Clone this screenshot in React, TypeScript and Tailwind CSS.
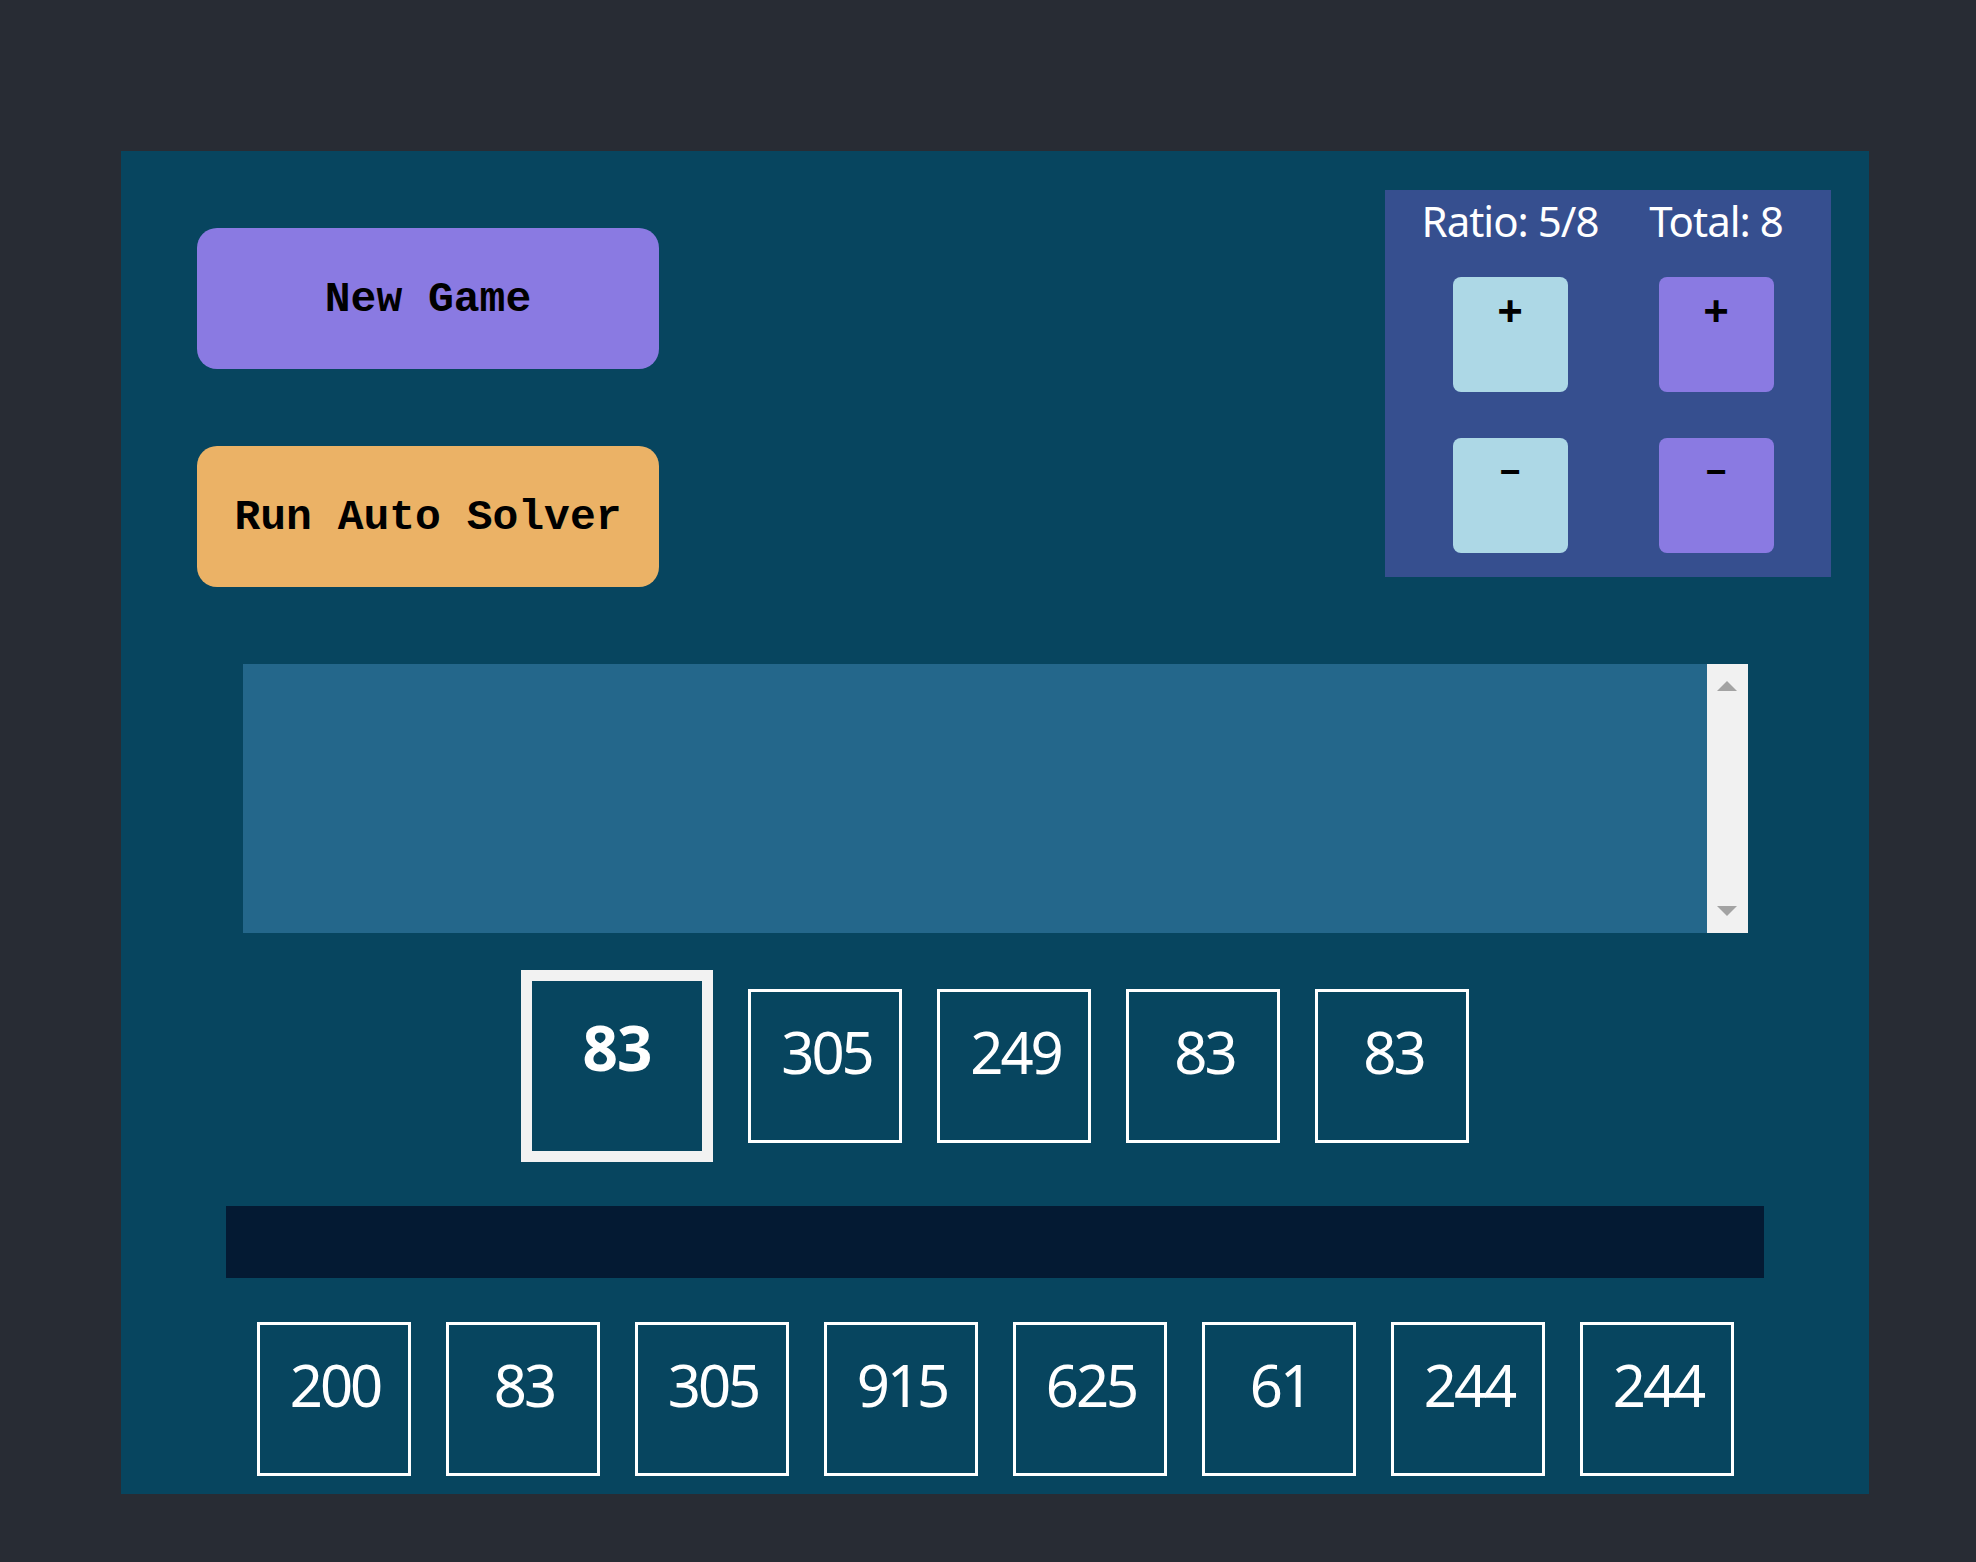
const topCards = [305, 249, 83, 83];
const bottomCards = [200, 83, 305, 915, 625, 61, 244, 244];

const numFont = { fontFamily: '"Noto Sans", "Open Sans", sans-serif' };

function NumberCard({ value }: { value: number }) {
  return (
    <div className="w-[154px] h-[154px] border-[3px] border-white text-white text-center pt-[20px] pl-[3px] text-[58px] leading-[79px] tracking-[-3px]">
      {value}
    </div>
  );
}

function StepButton({ label, tone }: { label: string; tone: "blue" | "purple" }) {
  const bg = tone === "blue" ? "bg-[#add8e6]" : "bg-[#8a7ae2]";
  return (
    <button type="button" className={`w-[115px] h-[115px] rounded-[8px] ${bg} flex justify-center items-start text-black font-bold`}>
      {label === "+" ? (
        <span className="pt-[10px] text-[45px] leading-[45px]">+</span>
      ) : (
        <span className="pt-[14px] text-[37px] leading-[37px]">−</span>
      )}
    </button>
  );
}

export default function App() {
  return (
    <div className="min-h-screen bg-[#282c34] pt-[151px] pl-[121px] pb-[68px]" style={numFont}>
      <div className="w-[1748px] h-[1343px] bg-[#07455f] flex flex-col">
        {/* controls */}
        <div className="flex justify-between items-start">
          <div className="ml-[76px] mt-[77px] flex flex-col gap-[77px]" style={{ fontFamily: '"Liberation Mono", "Courier New", monospace' }}>
            <button type="button" className="w-[462px] h-[141px] rounded-[20px] bg-[#8a7ae2] text-black text-[43px] font-bold pt-[4px]">
              New Game
            </button>
            <button type="button" className="w-[462px] h-[141px] rounded-[20px] bg-[#ebb266] text-black text-[43px] font-bold pt-[4px]">
              Run Auto Solver
            </button>
          </div>

          <div className="mt-[39px] mr-[38px] w-[446px] h-[387px] bg-[#364f8f] pl-[22px] pr-[12px] grid grid-cols-2 content-start">
            <div className="text-center text-white text-[42px] leading-[61px] tracking-[-1px]">Ratio: 5/8</div>
            <div className="text-center text-white text-[42px] leading-[61px] tracking-[-1px]">Total: 8</div>
            <div className="mt-[26px] flex justify-center">
              <StepButton label="+" tone="blue" />
            </div>
            <div className="mt-[26px] flex justify-center">
              <StepButton label="+" tone="purple" />
            </div>
            <div className="mt-[46px] flex justify-center">
              <StepButton label="−" tone="blue" />
            </div>
            <div className="mt-[46px] flex justify-center">
              <StepButton label="−" tone="purple" />
            </div>
          </div>
        </div>

        {/* history box */}
        <div className="mt-[77px] self-center w-[1505px] h-[269px] bg-[#24678b] flex justify-end">
          <div className="w-[41px] h-full bg-[#f1f1f1] flex flex-col items-center justify-between py-[17px]">
            <svg width="20" height="10" viewBox="0 0 20 10">
              <path d="M10 0 L20 10 L0 10 Z" fill="#a3a3a3" />
            </svg>
            <svg width="20" height="10" viewBox="0 0 20 10">
              <path d="M0 0 L20 0 L10 10 Z" fill="#a3a3a3" />
            </svg>
          </div>
        </div>

        {/* current hand */}
        <div className="mt-[37px] flex justify-center items-center gap-[35px]">
          <div className="w-[192px] h-[192px] border-[11px] border-[#f2f2f2] text-white text-center pt-[24px] text-[62px] leading-[84px] font-bold tracking-[-1px]">
            83
          </div>
          {topCards.map((v, i) => (
            <NumberCard key={i} value={v} />
          ))}
        </div>

        {/* drop zone */}
        <div className="mt-[44px] self-center w-[1538px] h-[72px] bg-[#041a33]" />

        {/* pool */}
        <div className="mt-[44px] flex justify-center gap-[35px]">
          {bottomCards.map((v, i) => (
            <NumberCard key={i} value={v} />
          ))}
        </div>
      </div>
    </div>
  );
}
